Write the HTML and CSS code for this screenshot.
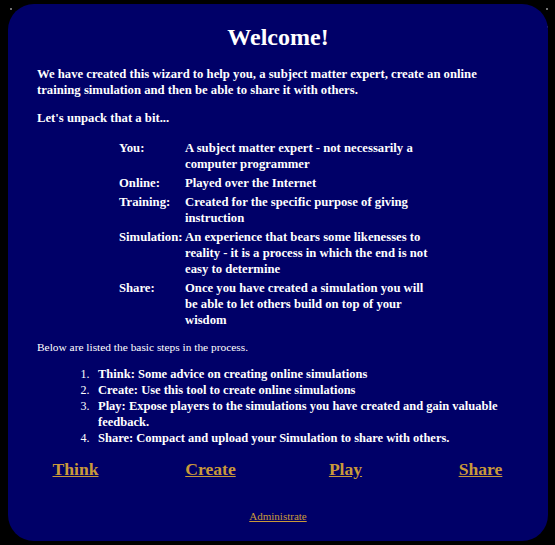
FILE: index.html
```html
<!DOCTYPE html>
<html>
<head>
<meta charset="utf-8">
<title>Welcome</title>
<link rel="stylesheet" href="styles.css">
</head>
<body>
<div class="panel">
  <h1 class="title">Welcome!</h1>
  <p class="text">We have created this wizard to help you, a subject matter expert, create an online training simulation and then be able to share it with others.</p>
  <p class="text">Let's unpack that a bit...</p>
  <div class="defs">
    <div class="term">You:</div>
    <div class="desc">A subject matter expert - not necessarily a computer programmer</div>
    <div class="term">Online:</div>
    <div class="desc">Played over the Internet</div>
    <div class="term">Training:</div>
    <div class="desc">Created for the specific purpose of giving instruction</div>
    <div class="term">Simulation:</div>
    <div class="desc">An experience that bears some likenesses to reality - it is a process in which the end is not easy to determine</div>
    <div class="term">Share:</div>
    <div class="desc">Once you have created a simulation you will be able to let others build on top of your wisdom</div>
  </div>
  <p class="small">Below are listed the basic steps in the process.</p>
  <ol class="steps">
    <li><span class="step">Think: Some advice on creating online simulations</span></li>
    <li><span class="step">Create: Use this tool to create online simulations</span></li>
    <li><span class="step">Play: Expose players to the simulations you have created and gain valuable feedback.</span></li>
    <li><span class="step">Share: Compact and upload your Simulation to share with others.</span></li>
  </ol>
  <div class="nav">
    <a class="nav-link" href="#">Think</a>
    <a class="nav-link" href="#">Create</a>
    <a class="nav-link" href="#">Play</a>
    <a class="nav-link" href="#">Share</a>
  </div>
  <div class="admin"><a class="admin-link" href="#">Administrate</a></div>
</div>
</body>
</html>
```
FILE: styles.css
```css
html, body {
  background-color: #000;
}
body {
  margin: 4px 7px 4px 8px;
  font-family: "Liberation Serif", "Times New Roman", serif;
  color: #fff;
  background-image:
    radial-gradient(circle at 3px 5px, #8a8a8a 0.6px, transparent 1.2px),
    radial-gradient(circle at 41px 23px, #6a6a6a 0.6px, transparent 1.2px),
    radial-gradient(circle at 19px 61px, #7a7a7a 0.6px, transparent 1.2px);
  background-size: 67px 71px, 83px 59px, 53px 97px;
}
.panel {
  background: #000068;
  border-radius: 26px;
  height: 537px;
  box-sizing: border-box;
  padding: 19px 29px 0 29px;
}
.title {
  margin: 0 0 15px;
  text-align: center;
  font-size: 24px;
  font-weight: bold;
  line-height: 28px;
}
.text {
  margin: 0 0 12px;
  font-size: 12.7px;
  font-weight: bold;
  line-height: 16px;
}
.defs {
  display: grid;
  grid-template-columns: 66px 252px;
  row-gap: 3px;
  justify-content: center;
  font-size: 12.7px;
  font-weight: bold;
  line-height: 16px;
  margin: 14px 0 12px;
}
.small {
  margin: 0 0 12px;
  font-size: 11.4px;
  line-height: 14px;
}
.steps {
  margin: 0 0 12px;
  padding-left: 61px;
  font-size: 12px;
  line-height: 16px;
}
.steps li::marker {
  content: counter(list-item) ".\00a0\2009\00a0";
}
.step {
  font-size: 12.5px;
  font-weight: bold;
}
.nav {
  display: grid;
  grid-template-columns: repeat(4, 1fr);
  margin: 0 -29px;
  text-align: center;
}
.nav-link {
  color: #c9993a;
  font-size: 17.6px;
  font-weight: bold;
  line-height: 22px;
}
.admin {
  text-align: center;
  margin-top: 29px;
  font-size: 11px;
  line-height: 14px;
}
.admin-link {
  color: #c9993a;
}
```
